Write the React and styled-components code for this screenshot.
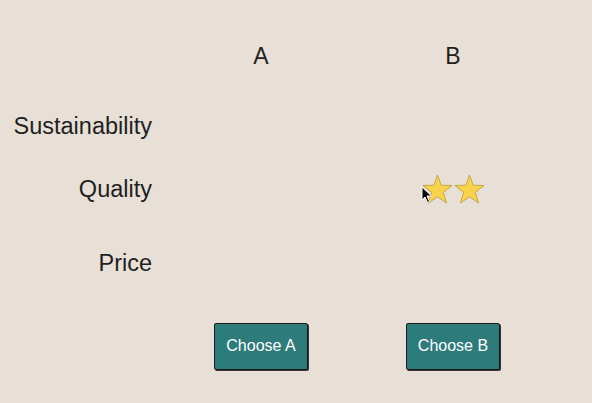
import React from 'react';
import styled, { createGlobalStyle } from 'styled-components';

// Global page styles
const GlobalStyle = createGlobalStyle`
  html, body {
    margin: 0;
    padding: 0;
    background: #e8e0d6;
    font-family: "Liberation Sans", Arial, sans-serif;
    color: #1f1f1f;
  }
`;

const Page = styled.div`
  width: 592px;
  height: 403px;
  background: #e8e0d6;
  position: relative;
  overflow: hidden;
`;

const Grid = styled.div`
  display: grid;
  grid-template-columns: 165px 192px 192px;
  grid-template-rows: 60px 80px 46px 102px 64px;
  padding-top: 26px;
  align-items: center;
`;

const Label = styled.div`
  font-size: 23.5px;
  text-align: right;
  padding-right: 13px;
  padding-top: 1px;
`;

const Cell = styled.div`
  display: flex;
  justify-content: center;
  align-items: center;
  font-size: 23px;
`;

const Button = styled.button`
  width: 94px;
  height: 47px;
  background: #2d7c7b;
  color: #fff;
  border: 1px solid #1a1a1a;
  border-radius: 2px;
  box-shadow: 1px 1px 0 #333;
  font-family: "Liberation Sans", Arial, sans-serif;
  font-size: 16px;
  padding: 0;
  cursor: pointer;
`;

const Stars = styled.div`
  display: flex;
  gap: 1px;
`;

const Cursor = styled.svg`
  position: absolute;
  left: 421px;
  top: 186px;
`;

const Star = () => (
  <svg width="31" height="30" viewBox="0 0 31 30">
    <polygon
      points="15.5,1 19.1,11.2 30,11.5 21.4,18.3 24.5,29 15.5,22.7 6.5,29 9.6,18.3 1,11.5 11.9,11.2"
      fill="#f9d34c"
      stroke="#b89a3a"
      strokeWidth="0.8"
      strokeLinejoin="round"
    />
  </svg>
);

const App = () => {
  return (
    <Page>
      <GlobalStyle />
      <Grid>
        {/* Header row */}
        <div />
        <Cell>A</Cell>
        <Cell>B</Cell>

        <Label>Sustainability</Label>
        <Cell />
        <Cell />

        <Label>Quality</Label>
        <Cell />
        <Cell>
          <Stars>
            <Star />
            <Star />
          </Stars>
        </Cell>

        <Label>Price</Label>
        <Cell />
        <Cell />

        <div />
        <Cell><Button>Choose A</Button></Cell>
        <Cell><Button>Choose B</Button></Cell>
      </Grid>

      {/* mouse pointer */}
      <Cursor width="12" height="18" viewBox="0 0 12 18">
        <path d="M1 1 L1 14 L4 11 L6.5 16.5 L8.5 15.5 L6 10 L10.5 10 Z" fill="#000" stroke="#fff" strokeWidth="1" />
      </Cursor>
    </Page>
  );
};

export default App;
